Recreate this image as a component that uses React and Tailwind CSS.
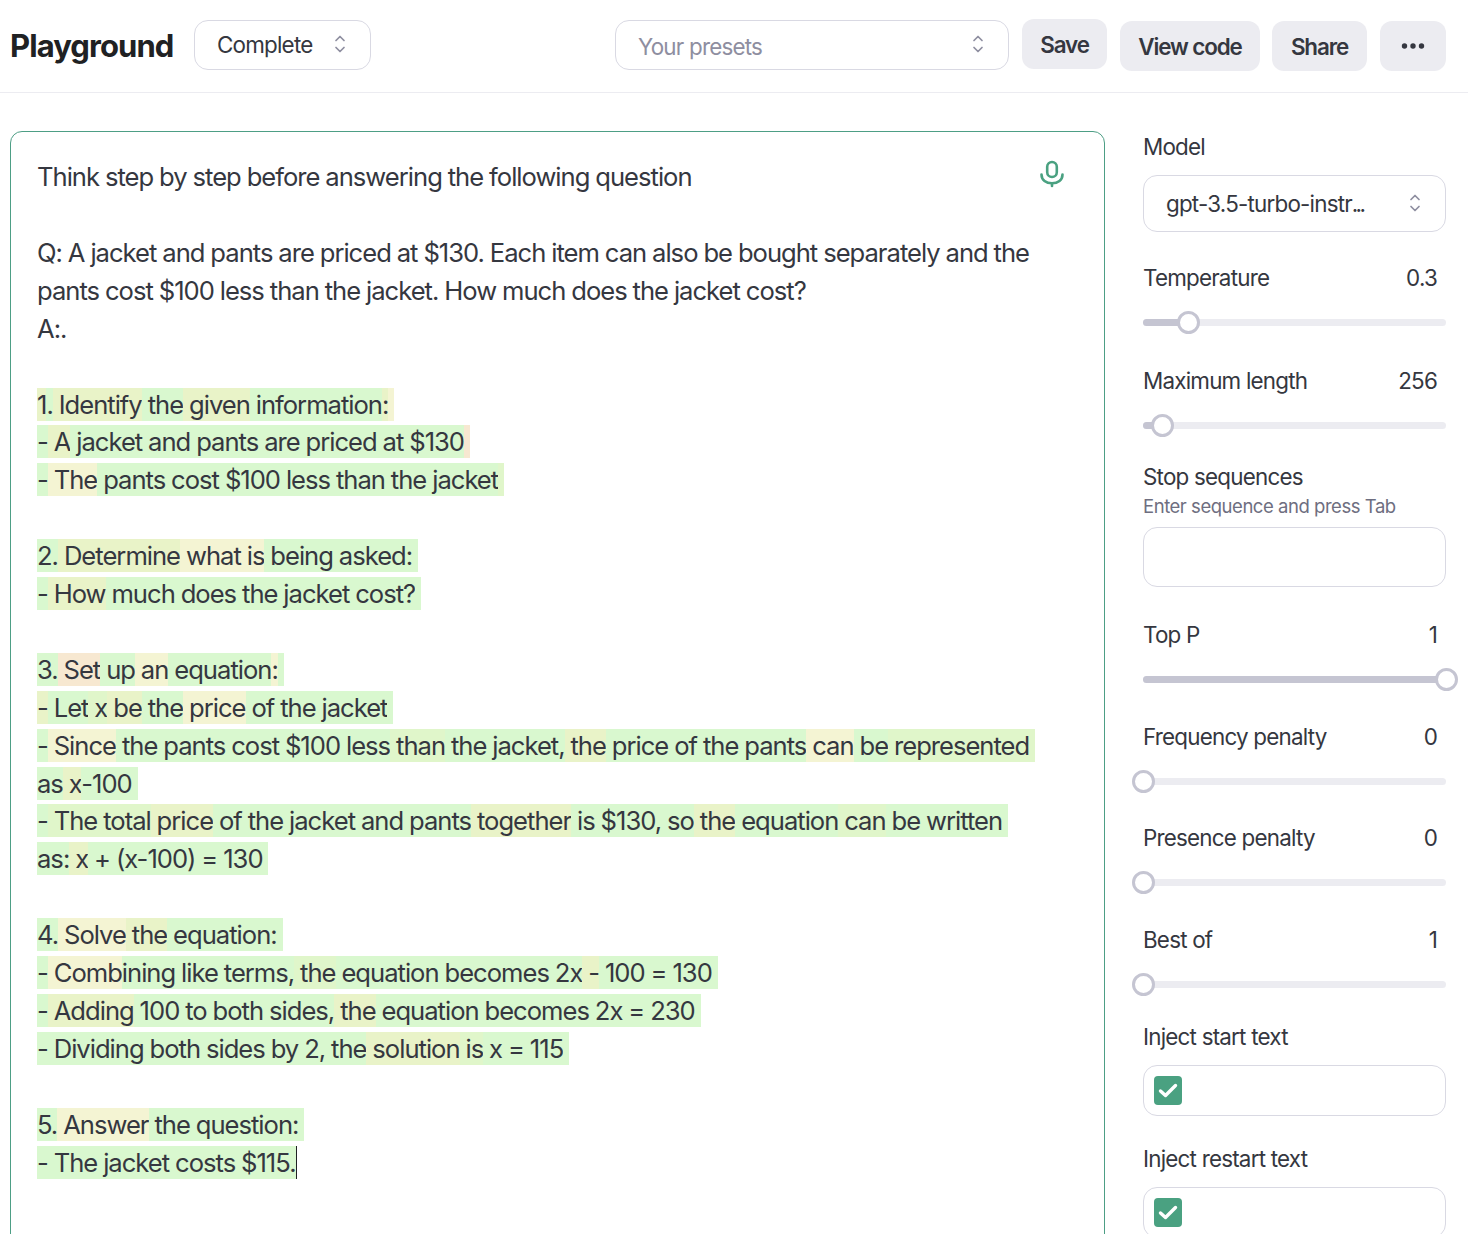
import React from 'react';

const g = 'bg-[#d9f8cf]';
const l = 'bg-[#e0f6ca]';
const o = 'bg-[#e9f3c8]';
const y = 'bg-[#f4f4d3]';
const r = 'bg-[#f7e8d1]';

// every line of the completion, split in the tokens that carry a probability colour
const lines = [
  [['1', o], ['.', g], [' Identify', o], [' the', g], [' given', o], [' information', g], [':', o], [' ', y]],
  [['-', g], [' A', o], [' jacket and pants are priced at $130', g], [' ', r]],
  [['-', g], [' The', y], [' pants cost $100 less than the jacket', g], [' ', l]],
  [],
  [['2.', g], [' Determine', o], [' what is', y], [' being asked:', g], [' ', g]],
  [['-', g], [' How', o], [' much does the jacket cost?', g], [' ', g]],
  [],
  [['3.', g], [' Set', r], [' up', g], [' an', y], [' equation', g], [':', y], [' ', g]],
  [['-', o], [' Let', g], [' x', l], [' be', o], [' the', g], [' price', y], [' of the jacket', g], [' ', g]],
  [['-', g], [' Since', y], [' the pants cost $100 less', g], [' than', l], [' the jacket,', g], [' the', o], [' price of the pants', g], [' can', y], [' be', g], [' represented', l], [' ', l]],
  [['as', g], [' x', o], ['-100', g], [' ', g]],
  [['-', g], [' The total', l], [' price', o], [' of the jacket and pants', g], [' together', o], [' is $130, so', g], [' the', o], [' equation', g], [' can', l], [' be written', g], [' ', g]],
  [['as:', g], [' x', o], [' + (x-100) = 130', g], [' ', g]],
  [],
  [['4.', g], [' Solve', y], [' the', o], [' equation:', g], [' ', g]],
  [['-', g], [' Comb', y], ['ining like terms,', g], [' the', l], [' equation becomes 2x', g], [' -', o], [' 100 = 130', g], [' ', g]],
  [['-', g], [' Adding', o], [' 100 to both sides,', g], [' the', o], [' equation becomes 2x = 230', g], [' ', g]],
  [['- Dividing both sides by 2, the', g], [' solution', o], [' is', l], [' x = 115', g], [' ', g]],
  [],
  [['5.', g], [' Answer', y], [' the question:', g], [' ', g]],
];

function UpDown({ className }) {
  return (
    <svg className={className} width="14" height="18" viewBox="0 0 14 18" fill="none" stroke="#8e8ea0" strokeWidth="1.7" strokeLinecap="round" strokeLinejoin="round">
      <path d="M3 5.5 7 1.5 11 5.5" />
      <path d="M3 12.5 7 16.5 11 12.5" />
    </svg>
  );
}

function Slider({ label, value, at }) {
  return (
    <div>
      <div className="flex justify-between pr-[9px] leading-[30px]">
        <span>{label}</span>
        <span>{value}</span>
      </div>
      <div className="relative h-[7px] mt-[26px] rounded-full bg-[#ececf1]">
        <div className="h-full rounded-full bg-[#c5c5d2]" style={{ width: at }} />
        <div className="absolute top-[-8px] w-[23px] h-[23px] -ml-[11px] rounded-full bg-white border-[3px] border-[#c5c5d2]" style={{ left: at }} />
      </div>
    </div>
  );
}

function Check() {
  return (
    <div className="w-[28px] h-[29px] rounded-[4px] bg-[#4aa181] flex items-center justify-center">
      <svg width="20" height="15" viewBox="0 0 20 15" fill="none" stroke="white" strokeWidth="3.4" strokeLinecap="round" strokeLinejoin="round">
        <path d="M2.5 8 7.5 12.5 17.5 2.5" />
      </svg>
    </div>
  );
}

export default function App() {
  return (
    <div className="w-[1468px] h-[1234px] overflow-hidden bg-white text-[#353740] font-['Inter','Liberation_Sans',sans-serif] text-[22.4px] tracking-[-0.035em]">
      {/* Top bar */}
      <div className="h-[93px] border-b border-[#ececf1] flex items-start pl-[10px] pt-5">
        <h1 className="w-[184px] pt-[1px] text-[#202123] text-[31px] font-bold leading-[50px] tracking-[-0.03em]">Playground</h1>
        <div className="w-[177px] h-[50px] pl-[22px] pr-[23px] flex items-center justify-between rounded-[14px] border border-[#d9d9e3]">
          <span className="-mt-[1px]">Complete</span>
          <UpDown className="-mt-[2px]" />
        </div>
        <div className="w-[394px] h-[50px] ml-[244px] pl-[22px] pr-[23px] flex items-center justify-between rounded-[14px] border border-[#d9d9e3] text-[#8e8ea0]">
          <span className="mt-[4px]">Your presets</span>
          <UpDown className="-mt-[2px]" />
        </div>
        <button className="w-[85px] h-[50px] ml-[13px] -mt-[1px] pt-[2px] rounded-[12px] bg-[#ececf1] font-semibold tracking-[-0.05em]">Save</button>
        <button className="w-[140px] h-[50px] ml-[13px] mt-[1px] pt-[2px] rounded-[12px] bg-[#ececf1] font-semibold tracking-[-0.05em]">View code</button>
        <button className="w-[95px] h-[50px] ml-[12px] mt-[1px] pt-[2px] rounded-[12px] bg-[#ececf1] font-semibold tracking-[-0.05em]">Share</button>
        <button className="w-[66px] h-[50px] ml-[13px] mt-[1px] rounded-[12px] bg-[#ececf1] flex items-center justify-center">
          <svg width="24" height="8" viewBox="0 0 24 8" fill="#353740">
            <circle cx="3.5" cy="4" r="2.7" />
            <circle cx="12" cy="4" r="2.7" />
            <circle cx="20.5" cy="4" r="2.7" />
          </svg>
        </button>
      </div>

      <div className="flex items-start pt-[38px] pl-[10px]">
        {/* Editor */}
        <div className="relative w-[1095px] h-[1200px] pl-[26px] pt-[26px] rounded-[12px] border border-[#4d9e85] text-[25.6px] leading-[37.92px] tracking-[-0.039em] [word-spacing:-0.3px] whitespace-pre">
          <svg className="absolute left-[1028px] top-[28px]" width="26" height="28" viewBox="0 0 26 28" fill="none" stroke="#4aa181" strokeWidth="2.6" strokeLinecap="round" strokeLinejoin="round">
            <rect x="8.2" y="2" width="9.6" height="15" rx="4.8" />
            <path d="M2.5 14.5c0 5.5 4.5 8.8 10.5 8.8s10.5-3.3 10.5-8.8" />
            <path d="M13 23.5V26" />
          </svg>

          <div>Think step by step before answering the following question</div>
          <div className="h-[37.92px]" />
          <div>Q: A jacket and pants are priced at $130. Each item can also be bought separately and the</div>
          <div>pants cost $100 less than the jacket. How much does the jacket cost?</div>
          <div>A:.</div>
          <div className="h-[37.92px]" />
          {lines.map((line, i) => (
            <div key={i} className="h-[37.92px]">
              {line.map(([text, color], j) => (
                <span key={j} className={`${color} py-[1px]`}>{text}</span>
              ))}
            </div>
          ))}
          <div>
            <span className="bg-[#d9f8cf] py-[1px] border-r border-[#202123]">- The jacket costs $115.</span>
          </div>
        </div>

        {/* Settings */}
        <div className="w-[303px] ml-[38px] flex flex-col">
          <div className="leading-[30px] mt-[1px]">Model</div>
          <div className="h-[57px] mt-[13px] pl-[22px] pr-[23px] flex items-center justify-between rounded-[14px] border border-[#d9d9e3]">
            <span>gpt-3.5-turbo-instr<span className="tracking-[-0.12em]">...</span></span>
            <UpDown className="-mt-[2px]" />
          </div>
          <div className="mt-[31px]"><Slider label="Temperature" value="0.3" at="45px" /></div>
          <div className="mt-[40px]"><Slider label="Maximum length" value="256" at="19px" /></div>
          <div className="leading-[30px] mt-[33px]">Stop sequences</div>
          <div className="text-[18.5px] leading-[24px] mt-[2px] text-[#6e6e80] tracking-[-0.025em]">Enter sequence and press Tab</div>
          <div className="h-[60px] mt-[9px] rounded-[14px] border border-[#d9d9e3]" />
          <div className="mt-[33px]"><Slider label="Top P" value="1" at="303px" /></div>
          <div className="mt-[39px]"><Slider label="Frequency penalty" value="0" at="0px" /></div>
          <div className="mt-[38px]"><Slider label="Presence penalty" value="0" at="0px" /></div>
          <div className="mt-[39px]"><Slider label="Best of" value="1" at="0px" /></div>
          <div className="leading-[30px] mt-[34px]">Inject start text</div>
          <div className="h-[51px] mt-[13px] pl-[10px] flex items-center rounded-[14px] border border-[#d9d9e3]"><Check /></div>
          <div className="leading-[30px] mt-[28px]">Inject restart text</div>
          <div className="h-[51px] mt-[13px] pl-[10px] flex items-center rounded-[14px] border border-[#d9d9e3]"><Check /></div>
        </div>
      </div>
    </div>
  );
}
